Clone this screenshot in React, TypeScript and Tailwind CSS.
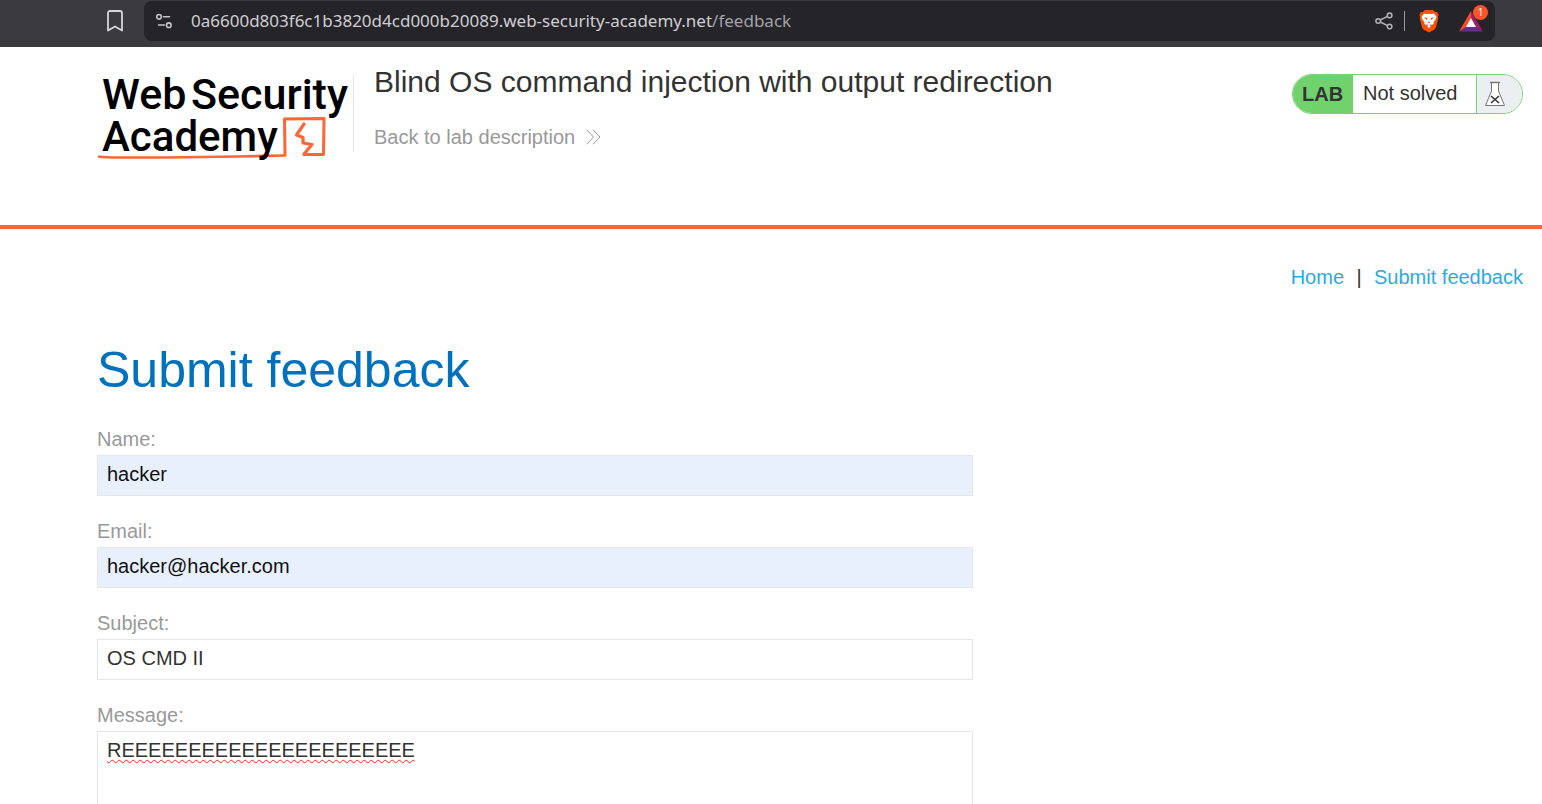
import React from "react";
import type { ReactNode } from "react";

function BookmarkIcon() {
  return (
    <svg width="18" height="24" viewBox="0 0 18 24" fill="none" stroke="#d6d5da" strokeWidth="1.8" strokeLinejoin="round" aria-hidden="true">
      <path d="M2 4C2 2.700 2.700 2 4 2h10c1.300 0 2 .7 2 2v17.500l-7-4-7 4z" />
    </svg>
  );
}

function SiteSettingsIcon() {
  return (
    <svg width="17" height="17" viewBox="0 0 17 17" fill="none" stroke="#c6c5ca" strokeWidth="1.600" aria-hidden="true">
      <circle cx="3" cy="3.800" r="2.300" />
      <path d="M7.500 3.800h6M2.500 12h6" strokeLinecap="round" />
      <circle cx="12.800" cy="12.200" r="2.300" />
    </svg>
  );
}

function ShareIcon() {
  return (
    <svg width="18" height="18" viewBox="0 0 18 18" fill="none" stroke="#b4b3b8" strokeWidth="1.500" aria-hidden="true">
      <circle cx="3.200" cy="9" r="2.300" />
      <circle cx="14.600" cy="3.400" r="2.300" />
      <circle cx="14.600" cy="14.600" r="2.300" />
      <path d="M5.300 8L12.500 4.400M5.300 10L12.500 13.600" />
    </svg>
  );
}

function LionIcon() {
  return (
    <svg width="20" height="24" viewBox="0 0 20 24" aria-hidden="true">
      <path d="M6 1h8l2 2 2-.1 1.600 2.900-.7 2 .4 1.500-2.300 9c-.3 1.100-1 1.900-1.900 2.500L10 23.600l-5.100-2.800c-.9-.6-1.600-1.400-1.900-2.500l-2.300-9L1.100 7.800l-.7-2L2 2.900 4 3z" fill="#fb5000" />
      <path d="M5 4.600l2.500.5L10 4.700l2.500.4 2.500-.5 2.400 3.200-.5 2.300-2.500 3.300.3 1.700-2.200 1-1.300-.8-.5.700 1.300 1.200L10 19l-2-1.800 1.300-1.200-.5-.7-1.300.8-2.200-1 .3-1.700-2.500-3.300-.5-2.300z" fill="#fff" />
      <path d="M5 8.200l3.400.9-.7 1.800zM15 8.200l-3.400.9.7 1.800zM8.700 13.300L10 12.600l1.300.7L10 14.300z" fill="#fb5000" />
    </svg>
  );
}

function TriangleIcon() {
  return (
    <svg width="24" height="21" viewBox="0 0 24 21" aria-hidden="true">
      <path d="M12 0L0 20.500L7.500 16L12 8z" fill="#f54a2c" />
      <path d="M12 0L24 20.500L16.500 16L12 8z" fill="#9e1f63" />
      <path d="M0 20.500H24L16.500 16H7.500z" fill="#662d91" />
      <path d="M12 7L7 16H17z" fill="#fff" />
    </svg>
  );
}

function AcademyLogo() {
  return (
    <svg width="256" height="104" viewBox="0 0 256 104" role="img" aria-label="Web Security Academy">
      <g fill="none" stroke="#ff6633" strokeLinejoin="round" strokeLinecap="round">
        <path d="M188 96L187.500 60L227 59.500L226.500 95.500L207 95.500" strokeWidth="3" />
        <path d="M188 96.500L140 97.500L70 98.500L15 98.500L2 97.800" strokeWidth="2.600" />
        <path d="M207 65L199.500 76L206 78.500L206 84L215 85.500L207 95" strokeWidth="3.200" />
      </g>
      <g fill="#000" fontFamily="Roboto, sans-serif" fontWeight="500">
        <text x="5" y="50" fontSize="43">Web</text>
        <text x="94" y="50" fontSize="43">Security</text>
        <text x="5" y="92" fontSize="42">Academy</text>
      </g>
    </svg>
  );
}

function FlaskIcon() {
  return (
    <svg width="22" height="26" viewBox="0 0 22 26" fill="none" aria-hidden="true">
      <path d="M7.500 1.500V10L1.500 24.500H20.500L14.500 10V1.500z" fill="#fff" stroke="#777" strokeWidth="1" />
      <path d="M6 1.500H16" stroke="#777" strokeWidth="1.400" />
      <path d="M7 15L15 22M15 15L7 22" stroke="#333332" strokeWidth="1.600" />
    </svg>
  );
}

function BrowserBar() {
  return (
    <div className="flex h-[47px] items-start bg-[#3b3a3f] pr-[47px] pl-[106px] pt-px">
      <button type="button" aria-label="Bookmark this page" className="flex h-10 w-[38px] items-center">
        <BookmarkIcon />
      </button>
      <div className="flex h-10 min-w-0 flex-1 items-center rounded-lg bg-[#252429] pr-3 pl-3">
        <button type="button" aria-label="Site settings" className="shrink-0">
          <SiteSettingsIcon />
        </button>
        <div className="ml-[18px] min-w-0 flex-1 truncate font-['Noto_Sans',sans-serif] text-[17px] leading-6 text-[#cfced3]">
          0a6600d803f6c1b3820d4cd000b20089.web-security-academy.net<span className="text-[#a3a2a7]">/feedback</span>
        </div>
        <button type="button" aria-label="Share" className="shrink-0">
          <ShareIcon />
        </button>
        <span className="ml-[11px] h-5 w-px bg-[#9b9a9f]" />
        <button type="button" aria-label="Shields" className="ml-3.5 shrink-0">
          <LionIcon />
        </button>
        <button type="button" aria-label="Rewards" className="relative ml-5 shrink-0">
          <TriangleIcon />
          <span className="absolute -top-1.5 left-3.5 flex size-[15px] items-center justify-center rounded-full bg-[#fb542b] font-['Noto_Sans',sans-serif] text-[10px] leading-none text-white">
            1
          </span>
        </button>
      </div>
    </div>
  );
}

function LabStatus() {
  return (
    <div className="flex h-10 shrink-0 overflow-hidden rounded-full border border-[#73d273] text-xl leading-9">
      <span className="w-[60px] bg-[#70d16d] pl-[9px] pt-px font-bold">LAB</span>
      <span className="w-[123px] pl-2.5">Not solved</span>
      <span className="flex w-[46px] items-center border-l border-[#73d273] bg-[#ebeff2] pl-[7px]">
        <FlaskIcon />
      </span>
    </div>
  );
}

function Field({ id, label, children }: { id: string; label: string; children: ReactNode }) {
  return (
    <div className="flex flex-col gap-1 pb-6">
      <label htmlFor={id} className="text-xl leading-[23px] text-[#999]">
        {label}
      </label>
      {children}
    </div>
  );
}

const box = "w-full rounded-none border border-[#e6e6e6] px-[9px] text-xl outline-none";

export default function App() {
  return (
    <div className="flex h-screen flex-col overflow-hidden bg-white font-['Liberation_Sans',Arial,sans-serif] text-[#333332]">
      <BrowserBar />
      <div className="flex-1 overflow-hidden">
        <header className="flex h-[182px] items-start border-b-4 border-[#ff6633] pr-[19px] pl-[97px] pt-3">
          <a href="#academy" className="block shrink-0">
            <AcademyLogo />
          </a>
          <div className="mt-4 h-[77px] w-[21px] shrink-0 border-l border-[#e6e6e6]" />
          <div className="mt-1.5 min-w-0 flex-1">
            <h2 className="text-[30px] leading-[34px]">Blind OS command injection with output redirection</h2>
            <a href="#description" className="mt-[26px] flex items-center gap-[11px] text-xl leading-6 text-[#999]">
              Back to lab description
              <svg width="15" height="16" viewBox="0 0 15 16" fill="none" stroke="#999" strokeWidth="1" aria-hidden="true">
                <path d="M.7 .7L7.500 8L.7 15.300M7 .7L14 8L7 15.300" />
              </svg>
            </a>
          </div>
          <div className="pt-[15px]">
            <LabStatus />
          </div>
        </header>
        <main className="pr-[19px] pl-[97px]">
          <nav className="flex justify-end pt-9 text-xl leading-6">
            <a href="#home" className="text-[#29abe2]">Home</a>
            <span className="w-[30px] text-center">|</span>
            <a href="#feedback" className="text-[#29abe2]">Submit feedback</a>
          </nav>
          <h1 className="mt-[53px] text-[50px] leading-[56px] text-[#0071bc]">Submit feedback</h1>
          <form className="mt-[30px] max-w-[876px]">
            <Field id="name" label="Name:">
              <input id="name" defaultValue="hacker" className={`${box} h-[41px] bg-[#e8effd] pb-[3px] text-[#111]`} />
            </Field>
            <Field id="email" label="Email:">
              <input id="email" type="email" defaultValue="hacker@hacker.com" className={`${box} h-[41px] bg-[#e8effd] pb-[3px] text-[#111]`} />
            </Field>
            <Field id="subject" label="Subject:">
              <input id="subject" defaultValue="OS CMD II" className={`${box} h-[41px] bg-white pb-[3px]`} />
            </Field>
            <Field id="message" label="Message:">
              <textarea
                id="message"
                rows={8}
                spellCheck={false}
                defaultValue="REEEEEEEEEEEEEEEEEEEEEE"
                className={`${box} resize-none bg-white pt-1.5 leading-6 underline decoration-[#ff2020] decoration-wavy decoration-[1px] underline-offset-2`}
              />
            </Field>
          </form>
        </main>
      </div>
    </div>
  );
}
